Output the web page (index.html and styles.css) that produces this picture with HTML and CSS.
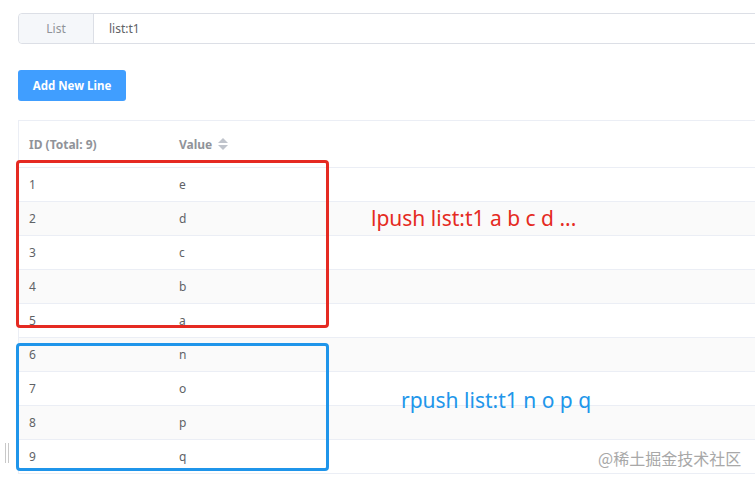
FILE: index.html
```html
<!DOCTYPE html>
<html>
<head>
<meta charset="utf-8">
<link rel="stylesheet" href="styles.css">
</head>
<body>
<div class="page">
  <div class="input-group">
    <div class="prepend">List</div>
    <div class="input">list:t1</div>
  </div>
  <button class="btn">Add New Line</button>
  <div class="table">
    <div class="row head">
      <div class="c1">ID (Total: 9)</div>
      <div class="c2">Value <span class="sort"><span class="up"></span><span class="down"></span></span></div>
    </div>
    <div class="row"><div class="c1">1</div><div class="c2">e</div></div>
    <div class="row striped"><div class="c1">2</div><div class="c2">d</div></div>
    <div class="row"><div class="c1">3</div><div class="c2">c</div></div>
    <div class="row striped"><div class="c1">4</div><div class="c2">b</div></div>
    <div class="row"><div class="c1">5</div><div class="c2">a</div></div>
    <div class="row striped"><div class="c1">6</div><div class="c2">n</div></div>
    <div class="row"><div class="c1">7</div><div class="c2">o</div></div>
    <div class="row striped"><div class="c1">8</div><div class="c2">p</div></div>
    <div class="row"><div class="c1">9</div><div class="c2">q</div></div>
  </div>
  <div class="box red-box"></div>
  <div class="box blue-box"></div>
  <div class="note red-note">lpush list:t1 a b c d ...</div>
  <div class="note blue-note">rpush list:t1 n o p q</div>
  <div class="watermark">@稀土掘金技术社区</div>
  <div class="handle"></div>
</div>
</body>
</html>
```
FILE: styles.css
```css
html, body {
  margin: 0;
  padding: 0;
  background: #fff;
  overflow: hidden;
}
body {
  width: 755px;
  height: 482px;
  font-family: "Noto Sans", "Noto Sans CJK SC", sans-serif;
}
.page {
  position: relative;
  padding: 13px 0 0 18px;
  height: 469px;
  box-sizing: content-box;
}
.input-group {
  display: flex;
  width: 800px;
  height: 31px;
  box-sizing: border-box;
  border: 1px solid #dcdfe6;
  border-radius: 4px;
  font-size: 12px;
}
.prepend {
  width: 74px;
  background: #f5f7fa;
  border-right: 1px solid #dcdfe6;
  color: #909399;
  display: flex;
  align-items: center;
  justify-content: center;
  border-radius: 4px 0 0 4px;
}
.input {
  display: flex;
  align-items: center;
  padding-left: 15px;
  color: #606266;
}
.btn {
  display: block;
  margin-top: 26px;
  width: 108px;
  height: 31px;
  border: none;
  border-radius: 3px;
  background: #409eff;
  color: #fff;
  font-family: "Noto Sans", sans-serif;
  font-weight: bold;
  font-size: 11.5px;
  padding: 0;
}
.table {
  margin-top: 19px;
  width: 800px;
  border-top: 1px solid #ebeef5;
  border-left: 1px solid #ebeef5;
  font-size: 12px;
  color: #606266;
}
.row {
  display: flex;
  height: 34px;
  align-items: center;
  border-bottom: 1px solid #ebeef5;
  box-sizing: border-box;
}
.row.head {
  height: 47px;
  color: #909399;
  font-weight: bold;
}
.row.striped {
  background: #fafafa;
}
.c1 {
  width: 150px;
  box-sizing: border-box;
  padding-left: 10px;
}
.c2 {
  padding-left: 10px;
  display: flex;
  align-items: center;
}
.sort {
  display: inline-flex;
  flex-direction: column;
  gap: 2px;
  margin-left: 6px;
}
.sort .up {
  width: 0;
  height: 0;
  border-left: 5px solid transparent;
  border-right: 5px solid transparent;
  border-bottom: 5px solid #c0c4cc;
}
.sort .down {
  width: 0;
  height: 0;
  border-left: 5px solid transparent;
  border-right: 5px solid transparent;
  border-top: 5px solid #c0c4cc;
}
.box {
  position: absolute;
  left: 16px;
  width: 313px;
  box-sizing: border-box;
  border: 3px solid;
  border-radius: 4px;
}
.red-box {
  top: 160px;
  height: 168px;
  border-color: #e52a22;
}
.blue-box {
  top: 343px;
  height: 128px;
  border-color: #1f95ea;
}
.note {
  position: absolute;
  font-size: 21px;
  font-family: "Noto Sans", sans-serif;
  white-space: nowrap;
}
.red-note {
  left: 371px;
  top: 204px;
  color: #e52a22;
}
.blue-note {
  left: 401px;
  top: 386px;
  color: #2196ea;
}
.watermark {
  position: absolute;
  left: 598px;
  top: 446px;
  font-size: 16px;
  color: #a8a8a8;
  font-family: "Noto Sans CJK SC", sans-serif;
}
.handle {
  position: absolute;
  left: 5px;
  top: 443px;
  width: 2px;
  height: 20px;
  border-left: 1px solid #c8c8c8;
  border-right: 1px solid #c8c8c8;
}
```
